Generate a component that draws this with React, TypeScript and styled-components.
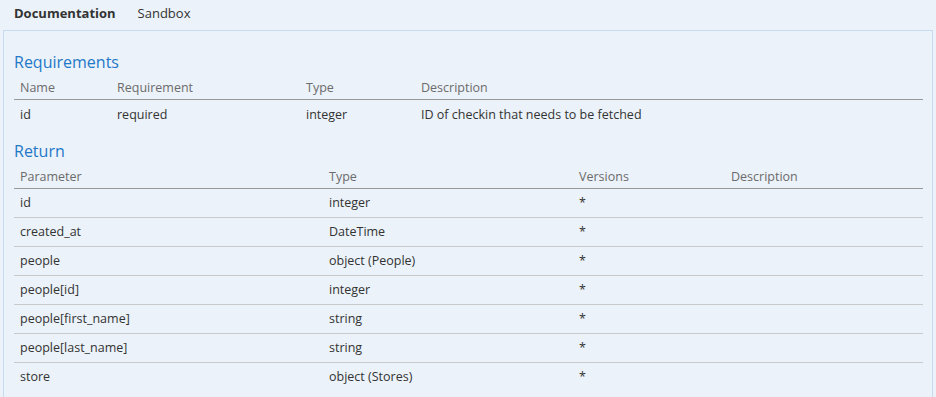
import styled, { createGlobalStyle } from "styled-components";

const GlobalStyle = createGlobalStyle`
  html, body {
    margin: 0;
    padding: 0;
    background: #ebf2f9;
    font-family: "Open Sans", "Noto Sans", sans-serif;
    color: #333;
  }
`;

const Page = styled.div`
  padding: 0 3px;
`;

const TabBar = styled.div`
  display: flex;
  height: 30px;
  align-items: flex-start;
`;

const Tab = styled.div<{ $active?: boolean }>`
  padding: 0 11px;
  font-size: 13px;
  font-weight: ${(p) => (p.$active ? 700 : 400)};
  color: #333;
  line-height: 26px;
`;

const Panel = styled.div`
  border: 1px solid #c6dbef;
  padding: 21px 9px 12px 10px;
`;

const Heading = styled.h3`
  margin: 0;
  font-size: 16px;
  font-weight: 400;
  line-height: 21px;
  color: #1f78c8;
`;

const Section = styled.section`
  & + & {
    margin-top: 13px;
  }
`;

const Table = styled.table`
  width: 100%;
  border-collapse: collapse;
  table-layout: fixed;
  font-size: 12.5px;
`;

const HeadCell = styled.th`
  text-align: left;
  font-weight: 400;
  color: #6b6b6b;
  padding: 6px 6px 2px;
  line-height: 18px;
  border-bottom: 1px solid #999;
  white-space: nowrap;
`;

const Row = styled.tr`
  & + & td {
    border-top: 1px solid #c9c9c9;
  }
`;

const Cell = styled.td<{ $lift?: boolean }>`
  padding: ${(p) => (p.$lift ? "6px 6px 4px" : "5px 6px")};
  line-height: 18px;
  color: #333;
  white-space: nowrap;
`;

type Column = { title: string; width?: number };

const requirementCols: Column[] = [
  { title: "Name", width: 97 },
  { title: "Requirement", width: 189 },
  { title: "Type", width: 115 },
  { title: "Description" },
];

const requirementRows = [
  ["id", "required", "integer", "ID of checkin that needs to be fetched"],
];

const returnCols: Column[] = [
  { title: "Parameter", width: 309 },
  { title: "Type", width: 250 },
  { title: "Versions", width: 152 },
  { title: "Description" },
];

const returnRows = [
  ["id", "integer", "*", ""],
  ["created_at", "DateTime", "*", ""],
  ["people", "object (People)", "*", ""],
  ["people[id]", "integer", "*", ""],
  ["people[first_name]", "string", "*", ""],
  ["people[last_name]", "string", "*", ""],
  ["store", "object (Stores)", "*", ""],
];

const DataTable = ({
  cols,
  rows,
  lift,
}: {
  cols: Column[];
  rows: string[][];
  lift?: boolean;
}) => (
  <Table>
    <colgroup>
      {cols.map((c) => (
        <col key={c.title} style={c.width ? { width: c.width } : undefined} />
      ))}
    </colgroup>
    <thead>
      <tr>
        {cols.map((c) => (
          <HeadCell key={c.title}>{c.title}</HeadCell>
        ))}
      </tr>
    </thead>
    <tbody>
      {rows.map((r, i) => (
        <Row key={i}>
          {r.map((v, j) => (
            <Cell key={j} $lift={lift}>
              {v}
            </Cell>
          ))}
        </Row>
      ))}
    </tbody>
  </Table>
);

export default function App() {
  return (
    <Page>
      <GlobalStyle />
      <TabBar>
        <Tab $active>Documentation</Tab>
        <Tab>Sandbox</Tab>
      </TabBar>
      <Panel>
        <Section>
          <Heading>Requirements</Heading>
          <DataTable cols={requirementCols} rows={requirementRows} lift />
        </Section>
        <Section>
          <Heading>Return</Heading>
          <DataTable cols={returnCols} rows={returnRows} />
        </Section>
      </Panel>
    </Page>
  );
}
